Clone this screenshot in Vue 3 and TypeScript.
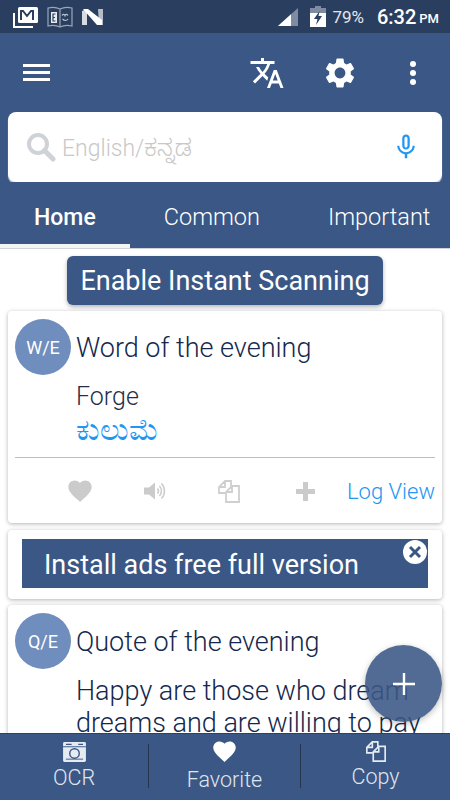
<script setup lang="ts">
import { ref } from "vue"

const tabs = ["Home", "Common", "Important"]
const activeTab = ref(0)

const heart =
  "M12 21.35l-1.45-1.32C5.4 15.36 2 12.28 2 8.5 2 5.42 4.42 3 7.5 3c1.74 0 3.41.81 4.5 2.09C13.09 3.81 14.76 3 16.5 3 19.58 3 22 5.42 22 8.5c0 3.78-3.4 6.86-8.55 11.54L12 21.35z"
const copy = "M8 14H2V8l6-6h6v5M8 2v6H2M15 7h7v16H9V13zM15 7v6H9"
</script>

<template>
  <div class="phone">
    <div class="status">
      <svg class="st-mail" width="26" height="22" viewBox="0 0 26 22">
        <path d="M1 7v14h19" fill="none" stroke="#fff" stroke-width="2" />
        <rect x="5" y="1" width="20" height="16" rx="1.500" fill="#fff" />
        <path d="M8 14V5h2l4 5 4-5h2v9" fill="none" stroke="#2a3f5f" stroke-width="2" />
      </svg>
      <svg class="st-book" width="26" height="22" viewBox="0 0 26 22">
        <path d="M13 3C9 1 5 1 1 2v18c4-1 8-1 12 1 4-2 8-2 12-1V2C21 1 17 1 13 3zM13 3v18" fill="none" stroke="#9aa6b8" stroke-width="1.200" />
        <path d="M4 6h6v11H4z" fill="#e8ebf0" />
        <path d="M8.500 8H6v7h2.500M6 11.500h2" fill="none" stroke="#2a3f5f" stroke-width="1.200" />
        <path d="M15 9.500c1-1.500 2.500-1.500 3 0 .5-1.500 2-1.500 3 0M15.500 13c2 2 4 2 5.500 0" fill="none" stroke="#b9c3d2" stroke-width="1.200" />
      </svg>
      <svg class="st-n" width="21" height="18" viewBox="0 0 21 18">
        <path d="M0 3l5-2v16H0z" fill="#d7dbe2" />
        <path d="M16 1h5v16h-4z" fill="#b4bcc9" />
        <path d="M1 1h5l14 11v5h-5z" fill="#fff" />
      </svg>
      <span class="spacer"></span>
      <svg class="st-signal" width="20" height="18" viewBox="0 0 20 18">
        <path d="M0 18L20 0v18z" fill="#7f8ba0" />
        <path d="M0 18L13 6.300V18z" fill="#fff" />
      </svg>
      <svg class="st-batt" width="16" height="21" viewBox="0 0 16 21">
        <path d="M5 0h6v2h5v19H0V2h5z" fill="#7f8ba0" />
        <path d="M0 7h16v14H0z" fill="#fff" />
        <path d="M9.500 5L4 13h3.500L6 19l6-9H8.500z" fill="#2a3f5f" />
      </svg>
      <span class="st-pct">79%</span>
      <span class="st-time">6:32</span>
      <span class="st-ampm">PM</span>
    </div>

    <div class="appbar">
      <div class="burger"><i></i><i></i><i></i></div>
      <span class="spacer"></span>
      <svg class="ic-translate" width="36" height="36" viewBox="0 0 24 24" fill="#fff">
        <path d="M12.870 15.070l-2.540-2.510.03-.03c1.740-1.940 2.980-4.170 3.710-6.530H17V4h-7V2H8v2H1v1.990h11.170C11.500 7.920 10.440 9.750 9 11.350 8.070 10.320 7.300 9.190 6.690 8h-2c.73 1.630 1.730 3.170 2.980 4.560l-5.090 5.020L4 19l5-5 3.110 3.110.76-2.040zM18.500 10h-2L12 22h2l1.120-3h4.750L21 22h2l-4.500-12zm-2.620 7l1.620-4.330L19.120 17h-3.240z" />
      </svg>
      <svg class="ic-gear" width="36" height="36" viewBox="0 0 24 24" fill="#fff">
        <path d="M19.140 12.940c.04-.3.06-.61.06-.94 0-.32-.02-.64-.07-.94l2.030-1.580c.18-.14.23-.41.12-.61l-1.920-3.320c-.12-.22-.37-.29-.59-.22l-2.390.96c-.5-.38-1.030-.7-1.620-.94l-.36-2.540c-.04-.24-.24-.41-.48-.41h-3.840c-.24 0-.43.17-.47.41l-.36 2.540c-.59.24-1.130.57-1.620.94l-2.390-.96c-.22-.08-.47 0-.59.22L2.740 8.870c-.12.21-.08.47.12.61l2.030 1.580c-.05.3-.09.63-.09.94s.02.64.07.94l-2.030 1.580c-.18.14-.23.41-.12.61l1.920 3.320c.12.22.37.29.59.22l2.390-.96c.5.38 1.030.7 1.620.94l.36 2.540c.05.24.24.41.48.41h3.840c.24 0 .44-.17.47-.41l.36-2.540c.59-.24 1.130-.56 1.620-.94l2.390.96c.22.08.47 0 .59-.22l1.920-3.320c.12-.22.07-.47-.12-.61l-2.010-1.580zM12 15.600c-1.980 0-3.600-1.620-3.600-3.600s1.620-3.600 3.600-3.600 3.600 1.620 3.600 3.600-1.620 3.600-3.600 3.600z" />
      </svg>
      <div class="dots"><i></i><i></i><i></i></div>
    </div>

    <div class="searchwrap">
      <div class="search">
        <svg width="30" height="30" viewBox="0 0 30 30">
          <circle cx="12" cy="12" r="9" fill="none" stroke="#cfd2d6" stroke-width="4" />
          <path d="M18.500 18.500L27 27" stroke="#cfd2d6" stroke-width="5" stroke-linecap="round" />
        </svg>
        <span class="placeholder">English/ಕನ್ನಡ</span>
        <span class="spacer"></span>
        <svg class="mic" width="30" height="30" viewBox="0 0 24 24" fill="#2196f3">
          <path d="M12 14c1.660 0 2.990-1.340 2.990-3L15 5c0-1.660-1.340-3-3-3S9 3.340 9 5v6c0 1.660 1.340 3 3 3zm-1.200-9.100c0-.66.54-1.200 1.200-1.200.66 0 1.200.54 1.200 1.200l-.01 6.200c0 .66-.53 1.200-1.190 1.200-.66 0-1.200-.54-1.200-1.200V4.900zm6.500 6.100c0 3-2.540 5.100-5.300 5.100S6.700 14 6.700 11H5c0 3.410 2.720 6.230 6 6.720V21h2v-3.280c3.280-.48 6-3.300 6-6.720h-1.700z" />
        </svg>
      </div>
    </div>

    <div class="tabs">
      <div
        v-for="(tab, i) in tabs"
        :key="tab"
        class="tab"
        :class="{ active: activeTab === i }"
        @click="activeTab = i"
      >
        {{ tab }}
      </div>
    </div>

    <div class="content">
      <div class="scan-row">
        <button class="scan">Enable Instant Scanning</button>
      </div>

      <div class="card word">
        <div class="head">
          <div class="avatar">W/E</div>
          <div class="title">Word of the evening</div>
        </div>
        <div class="en">Forge</div>
        <div class="kn">ಕುಲುಮೆ</div>
        <div class="divider"></div>
        <div class="actions">
          <svg class="a-heart" width="28" height="28" viewBox="0 0 24 24" fill="#cbcbcb"><path :d="heart" /></svg>
          <svg class="a-sound" width="24" height="24" viewBox="0 0 24 24" fill="none">
            <path d="M1 8.500h5L12 3.500v17l-6-5H1z" fill="#cbcbcb" />
            <path d="M14.500 9.500a4 4 0 0 1 0 5M16.500 7a7.500 7.500 0 0 1 0 10M18.500 4.500a11 11 0 0 1 0 15" stroke="#cbcbcb" stroke-width="1.500" />
          </svg>
          <svg class="a-copy" width="24" height="24" viewBox="0 0 24 24" fill="none" stroke="#cfcfcf" stroke-width="1.800"><path :d="copy" /></svg>
          <svg class="a-plus" width="19" height="19" viewBox="0 0 19 19" fill="#cbcbcb"><path d="M7 0h5v7h7v5h-7v7H7v-7H0V7h7z" /></svg>
          <span class="logview">Log View</span>
        </div>
      </div>

      <div class="card ad">
        <div class="banner">Install ads free full version</div>
        <div class="close">
          <svg width="14" height="14" viewBox="0 0 14 14"><path d="M2 2l10 10M12 2L2 12" stroke="#3a5785" stroke-width="3" /></svg>
        </div>
      </div>

      <div class="card quote">
        <div class="head">
          <div class="avatar">Q/E</div>
          <div class="title">Quote of the evening</div>
        </div>
        <div class="quote-text">Happy are those who dream dreams and are willing to pay</div>
      </div>
    </div>

    <div class="fab">
      <svg width="22" height="22" viewBox="0 0 22 22"><path d="M11 0v22M0 11h22" stroke="#fff" stroke-width="2.400" /></svg>
    </div>

    <div class="bottom">
      <div class="bitem ocr">
        <svg width="23" height="20" viewBox="0 0 24 21">
          <rect width="24" height="21" rx="1.500" fill="#e6ebf2" />
          <path d="M0 5h24" stroke="#3a5785" stroke-width="1" />
          <path d="M3 2.500h6M16 2.500h5" stroke="#3a5785" stroke-width="1.500" />
          <circle cx="12" cy="12" r="5" fill="none" stroke="#3a5785" stroke-width="1.500" />
          <path d="M3 18h18" stroke="#3a5785" stroke-width="1" />
        </svg>
        <span>OCR</span>
      </div>
      <div class="bitem fav">
        <svg width="27" height="27" viewBox="0 0 24 24" fill="#fff"><path :d="heart" /></svg>
        <span>Favorite</span>
      </div>
      <div class="bitem cpy">
        <svg width="22" height="22" viewBox="0 0 24 24" fill="none" stroke="#e6ebf2" stroke-width="1.800"><path :d="copy" /></svg>
        <span>Copy</span>
      </div>
    </div>
  </div>
</template>

<style>
html,
body {
  margin: 0;
  background: #fff;
}
</style>

<style scoped>
.phone {
  position: relative;
  width: 450px;
  height: 800px;
  overflow: hidden;
  display: flex;
  flex-direction: column;
  background: #fff;
  font-family: Roboto, "Noto Sans", sans-serif;
}

.spacer {
  flex: 1;
}

.status {
  height: 33px;
  flex: none;
  display: flex;
  align-items: center;
  background: #2a3f5f;
  color: #fff;
  padding: 0 11px 0 13px;
  box-sizing: border-box;
}
.st-book {
  margin-left: 8px;
}
.st-n {
  margin-left: 9px;
}
.st-batt {
  margin-left: 12px;
}
.st-pct {
  margin-left: 6px;
  font-size: 17px;
  color: #e3e7ed;
}
.st-time {
  margin-left: 13px;
  font-size: 20px;
  font-weight: 500;
}
.st-ampm {
  margin-left: 3px;
  font-size: 13px;
  font-weight: 500;
  margin-top: 4px;
}

.appbar {
  height: 79px;
  flex: none;
  display: flex;
  align-items: center;
  background: #3a5785;
  padding: 0 34px 0 23px;
  box-sizing: border-box;
}
.burger {
  display: flex;
  flex-direction: column;
  gap: 4px;
}
.burger i {
  display: block;
  width: 27px;
  height: 3px;
  background: #fff;
}
.ic-gear {
  margin-left: 37px;
}
.dots {
  margin-left: 52px;
  display: flex;
  flex-direction: column;
  gap: 3px;
}
.dots i {
  display: block;
  width: 6px;
  height: 6px;
  border-radius: 50%;
  background: #fff;
}

.searchwrap {
  flex: none;
  background: #3a5785;
  padding: 0 8px;
}
.search {
  height: 70px;
  display: flex;
  align-items: center;
  padding: 0 21px 0 18px;
  background: #fff;
  border-radius: 8px;
  box-shadow: 0 2px 1px #c9ccd2;
  box-sizing: border-box;
}
.placeholder {
  margin: 9px 0 0 6px;
  font-size: 23px;
  font-weight: 300;
  color: #c8c8c8;
  font-family: Roboto, "Noto Sans", "Noto Sans Kannada", sans-serif;
}

.tabs {
  flex: none;
  height: 67px;
  display: flex;
  background: #3a5785;
  border-bottom: 1px solid #d0d3d8;
  box-sizing: border-box;
}
.tab {
  padding: 4px 34px 0;
  display: flex;
  align-items: center;
  font-size: 23.5px;
  font-weight: 300;
  color: #fff;
  white-space: nowrap;
  box-sizing: border-box;
  height: 66px;
}
.tab.active {
  font-size: 23px;
  font-weight: 500;
  border-bottom: 4px solid #f4f4f4;
  padding-top: 8px;
}

.content {
  flex: 1;
  min-height: 0;
  overflow: hidden;
  padding: 7px 8px 0;
}
.scan-row {
  display: flex;
  justify-content: center;
}
.scan {
  width: 316px;
  height: 49px;
  border: none;
  padding: 0;
  border-radius: 6px;
  background: #3a5785;
  color: #fff;
  font-family: inherit;
  font-size: 27px;
  box-shadow: 0 2px 4px rgba(0, 0, 0, 0.3);
}

.card {
  background: #fff;
  border-radius: 4px;
  box-shadow: 0 1px 4px rgba(0, 0, 0, 0.3);
}
.word {
  margin-top: 6px;
  height: 212px;
  padding: 8px 7px 0;
  box-sizing: border-box;
}
.head {
  display: flex;
  align-items: center;
  gap: 5px;
}
.avatar {
  width: 56px;
  height: 56px;
  flex: none;
  border-radius: 50%;
  background: #6f8dbd;
  color: #fff;
  font-size: 18px;
  display: flex;
  align-items: center;
  justify-content: center;
}
.title {
  font-size: 27px;
  font-weight: 300;
  color: #14284d;
  white-space: nowrap;
  padding-top: 2px;
}
.en {
  margin: 6px 0 0 61px;
  font-size: 25px;
  font-weight: 300;
  color: #1f3048;
  line-height: 32px;
}
.kn {
  margin: -2px 0 0 61px;
  font-size: 30px;
  line-height: 37px;
  color: #2196f3;
}
.divider {
  margin-top: 9px;
  height: 1px;
  background: #bdbdbd;
}
.actions {
  display: flex;
  align-items: center;
  height: 66px;
  position: relative;
}
.a-heart {
  margin-left: 51px;
}
.a-sound {
  margin-left: 49px;
}
.a-copy {
  margin-left: 50px;
}
.a-plus {
  margin-left: 55px;
}
.logview {
  margin-left: auto;
  font-size: 22px;
  font-weight: 300;
  color: #2196f3;
  white-space: nowrap;
}

.ad {
  position: relative;
  margin-top: 7px;
  padding: 9px 14px 11px;
}
.banner {
  height: 49px;
  background: #3a5785;
  color: #fff;
  font-size: 27px;
  line-height: 52px;
  padding-left: 22px;
}
.close {
  position: absolute;
  top: 10px;
  right: 15px;
  width: 24px;
  height: 24px;
  border-radius: 50%;
  background: #fff;
  display: flex;
  align-items: center;
  justify-content: center;
}

.quote {
  margin-top: 6px;
  height: 200px;
  padding: 8px 7px 0;
  box-sizing: border-box;
}
.quote-text {
  margin: 6px -6px 0 61px;
  font-size: 27px;
  font-weight: 300;
  line-height: 32px;
  color: #14284d;
}

.fab {
  position: absolute;
  left: 365px;
  top: 645px;
  width: 77px;
  height: 77px;
  border-radius: 50%;
  background: rgba(58, 87, 133, 0.88);
  box-shadow: 0 2px 6px rgba(0, 0, 0, 0.25);
  display: flex;
  align-items: center;
  justify-content: center;
}

.bottom {
  position: relative;
  flex: none;
  height: 67px;
  display: flex;
  background: #3a5785;
  border-top: 1px solid #1f4475;
  box-sizing: border-box;
  padding: 10px 0 12px;
}
.bitem {
  flex: none;
  width: 152px;
  box-sizing: border-box;
  display: flex;
  flex-direction: column;
  align-items: center;
  color: #e0e6ee;
  font-size: 21.5px;
  font-weight: 300;
  border-left: 1px solid #24344e;
  line-height: 26px;
}
.bitem.ocr {
  width: 148px;
  border-left: none;
}
.bitem.cpy {
  width: 150px;
}
.bitem svg {
  flex: none;
  margin-top: -2px;
}
.bitem span {
  margin-top: 3px;
}
.bitem.fav svg {
  margin-top: -6px;
}
.bitem.fav span {
  margin-top: 2px;
}
.bitem.cpy svg {
  margin-top: -4px;
}
.bitem.cpy span {
  margin-top: 2px;
}
</style>
